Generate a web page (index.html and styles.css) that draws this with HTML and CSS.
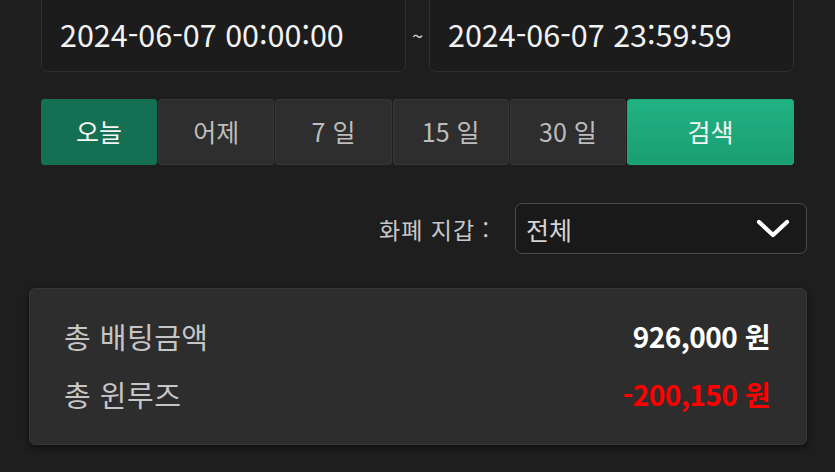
FILE: index.html
```html
<!DOCTYPE html>
<html lang="ko">
<head>
    <meta charset="UTF-8">
    <meta name="viewport" content="width=835, initial-scale=1.0">
    <title>배팅 내역</title>
    <link rel="stylesheet" href="styles.css">
</head>
<body>
    <div class="page">
        <div class="date-row">
            <div class="date-input">2024-06-07 00:00:00</div>
            <span class="tilde">~</span>
            <div class="date-input">2024-06-07 23:59:59</div>
        </div>

        <div class="period-row">
            <button class="period-btn active">오늘</button>
            <button class="period-btn">어제</button>
            <button class="period-btn">7 일</button>
            <button class="period-btn">15 일</button>
            <button class="period-btn">30 일</button>
            <button class="search-btn">검색</button>
        </div>

        <div class="wallet-row">
            <span class="wallet-label">화폐 지갑 :</span>
            <div class="wallet-select">
                <span>전체</span>
                <svg class="chevron" width="34" height="20" viewBox="0 0 34 20">
                    <path d="M3 3 L17 16 L31 3" fill="none" stroke="#fff" stroke-width="4.2" stroke-linecap="round" stroke-linejoin="round"/>
                </svg>
            </div>
        </div>

        <div class="summary-card">
            <div class="summary-row">
                <span class="summary-label">총 배팅금액</span>
                <span class="summary-value">926,000 원</span>
            </div>
            <div class="summary-row">
                <span class="summary-label">총 윈루즈</span>
                <span class="summary-value minus">-200,150 원</span>
            </div>
        </div>
    </div>
</body>
</html>
```

FILE: styles.css
```css
body {
    margin: 0;
    padding: 0;
    background-color: #1e1e1e;
    font-family: 'Noto Sans CJK KR', 'Noto Sans', sans-serif;
    overflow: hidden;
}

.page {
    width: 835px;
    height: 472px;
}

/* 날짜 입력 */
.date-row {
    display: flex;
    align-items: center;
    width: 753px;
    margin: -6px 0 0 41px;
}

.date-input {
    box-sizing: border-box;
    width: 365px;
    height: 78px;
    padding: 1px 0 0 18px;
    display: flex;
    align-items: center;
    background-color: #1c1c1c;
    border: 1px solid #2f2f2f;
    border-radius: 7px;
    color: #f2f2f2;
    font-size: 30.5px;
}

.tilde {
    width: 23px;
    text-align: center;
    color: #d0d0d0;
    font-size: 20px;
    padding-top: 4px;
}

/* 기간 버튼 */
.period-row {
    display: grid;
    grid-template-columns: repeat(5, 1fr) 167px;
    gap: 1px;
    width: 753px;
    margin: 27px 0 0 41px;
}

.period-btn,
.search-btn {
    height: 66px;
    border: 1px solid #363636;
    border-radius: 3px;
    background-color: #2e2e2e;
    color: #bdbdbd;
    font-family: inherit;
    font-size: 25px;
    padding: 0 0 3px;
    cursor: pointer;
}

.period-btn.active {
    background-color: #156f52;
    border-color: #156f52;
    color: #f5f5f5;
}

.search-btn {
    background: linear-gradient(#21b283, #1a9e72);
    border-color: #1fa97b;
    color: #f5f5f5;
}

/* 지갑 선택 */
.wallet-row {
    display: flex;
    justify-content: flex-end;
    align-items: center;
    gap: 25px;
    width: 807px;
    margin-top: 38px;
}

.wallet-label {
    color: #c8c8c8;
    font-size: 23px;
    letter-spacing: 1px;
}

.wallet-select {
    box-sizing: border-box;
    width: 292px;
    height: 51px;
    display: flex;
    align-items: center;
    justify-content: space-between;
    padding: 0 16px 0 10px;
    background-color: #191919;
    border: 1.5px solid #4a4a4a;
    border-radius: 7px;
    color: #d4d4d4;
    font-size: 25px;
}

/* 합계 카드 */
.summary-card {
    box-sizing: border-box;
    width: 778px;
    height: 157px;
    margin: 34px 0 0 29px;
    padding: 18px 36px 0 34px;
    background-color: #2d2d2d;
    border: 1px solid #363636;
    border-radius: 6px;
    box-shadow: 0 3px 6px rgba(0, 0, 0, 0.5);
}

.summary-row {
    display: flex;
    justify-content: space-between;
    align-items: center;
    height: 58px;
}

.summary-label {
    color: #c6c6c6;
    font-size: 29px;
    letter-spacing: 0.5px;
}

.summary-value {
    color: #fff;
    font-size: 28px;
    font-weight: bold;
    letter-spacing: -0.5px;
}

.summary-value.minus {
    color: #ff0000;
}
```
